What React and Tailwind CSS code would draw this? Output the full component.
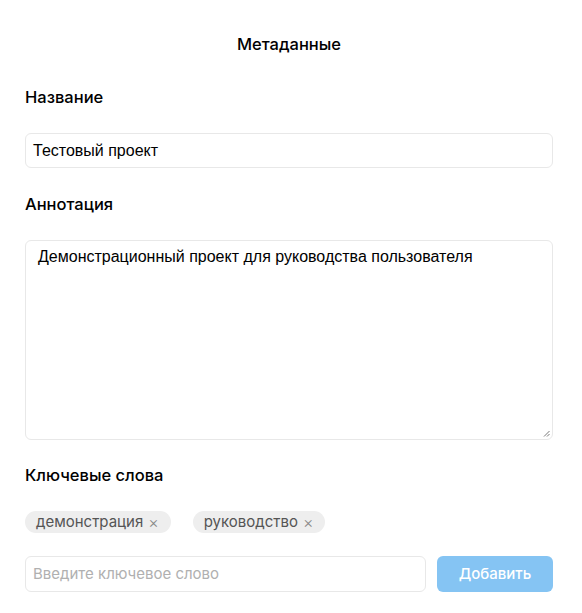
export default function App() {
  return (
    <div className="min-h-[613px] w-[582px] bg-white font-['Inter',sans-serif] text-black">
      <div className="pl-[25px] pr-[29px] pt-[33px]">
        <h1 className="text-center text-[16.5px] font-medium leading-[22px]">Метаданные</h1>
        <div className="mt-[31px] text-[16.5px] font-medium leading-[22px]">Название</div>
        <div className="mt-[25px] flex h-[35px] items-center rounded-[6px] border border-[#e8e8e8] px-[7px] font-['Liberation_Sans',sans-serif] text-[16px]">
          Тестовый проект
        </div>
        <div className="mt-[25px] text-[16.5px] font-medium leading-[22px]">Аннотация</div>
        <div className="relative mt-[25px] h-[200px] rounded-[6px] border border-[#e8e8e8] px-[12px] pt-[6px] font-['Liberation_Sans',sans-serif] text-[16px] leading-[20px]">
          Демонстрационный проект для руководства пользователя
          <svg className="absolute bottom-[2px] right-[2px]" width="7" height="7" viewBox="0 0 7 7">
            <path d="M6.5 1 L1 6.5 M6.5 4 L4 6.5" stroke="#555" strokeWidth="0.8" />
          </svg>
        </div>
        <div className="mt-[24px] text-[16.5px] font-medium leading-[22px]">Ключевые слова</div>
        <div className="mt-[25px] flex gap-[22px]">
          <span className="flex h-[22px] items-center rounded-full bg-[#eeeeee] pl-[11px] pr-[12px] text-[15px] text-[#555]">
            демонстрация<span className="ml-[5px] text-[16px] font-light text-[#888]">×</span>
          </span>
          <span className="flex h-[22px] items-center rounded-full bg-[#eeeeee] pl-[11px] pr-[12px] text-[15px] text-[#555]">
            руководство<span className="ml-[5px] text-[16px] font-light text-[#888]">×</span>
          </span>
        </div>
        <div className="mt-[23px] flex gap-[11px]">
          <div className="flex h-[36px] flex-1 items-center rounded-[6px] border border-[#e8e8e8] px-[7px] text-[15px] text-[#b0b0b0]">
            Введите ключевое слово
          </div>
          <button className="h-[36px] w-[116px] rounded-[6px] bg-[#85c4f3] text-[15px] font-medium text-white">
            Добавить
          </button>
        </div>
      </div>
    </div>
  );
}
